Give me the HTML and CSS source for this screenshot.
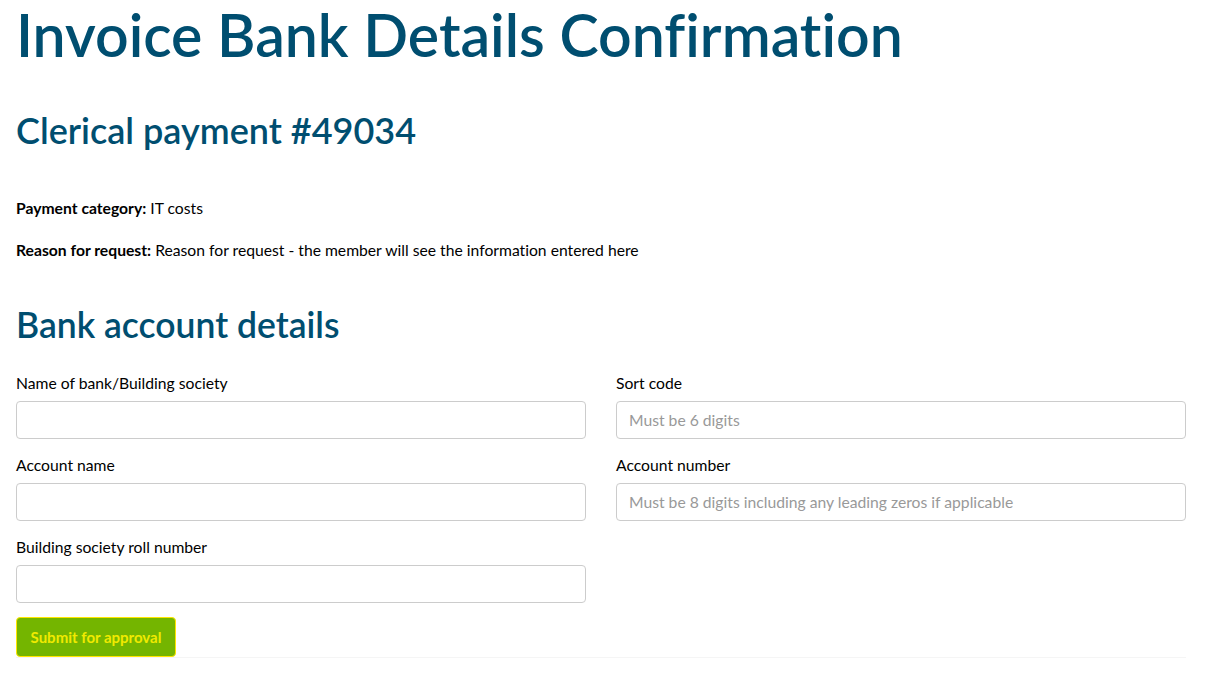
FILE: index.html
```html
<!DOCTYPE html>
<html lang="en">
<head>
<meta charset="utf-8">
<title>Invoice Bank Details Confirmation</title>
<link rel="stylesheet" href="styles.css">
</head>
<body>
<main class="page">
  <h1 class="title">Invoice Bank Details Confirmation</h1>
  <h2 class="subtitle">Clerical payment #49034</h2>
  <p class="meta"><strong>Payment category:</strong> IT costs</p>
  <p class="meta"><strong>Reason for request:</strong> Reason for request - the member will see the information entered here</p>
  <h2 class="section-title">Bank account details</h2>
  <form class="form">
    <div class="grid">
      <div class="field">
        <label class="label" for="bank">Name of bank/Building society</label>
        <input class="input" id="bank" type="text">
      </div>
      <div class="field">
        <label class="label" for="sort">Sort code</label>
        <input class="input" id="sort" type="text" placeholder="Must be 6 digits">
      </div>
      <div class="field">
        <label class="label" for="accname">Account name</label>
        <input class="input" id="accname" type="text">
      </div>
      <div class="field">
        <label class="label" for="accnum">Account number</label>
        <input class="input" id="accnum" type="text" placeholder="Must be 8 digits including any leading zeros if applicable">
      </div>
      <div class="field">
        <label class="label" for="roll">Building society roll number</label>
        <input class="input" id="roll" type="text">
      </div>
    </div>
    <div class="actions">
      <button class="btn" type="button">Submit for approval</button>
    </div>
  </form>
</main>
</body>
</html>
```

FILE: styles.css
```css
* { box-sizing: border-box; }
html, body { margin: 0; padding: 0; background: #fff; }
body {
  font-family: "Lato", "Noto Sans", sans-serif;
  font-size: 15.7px;
  color: #000;
  font-variant-ligatures: none;
}
.page {
  padding: 0 26px 0 16px;
}
.title {
  margin: 0;
  padding-top: 4px;
  font-weight: 600;
  font-size: 59px;
  line-height: 62px;
  color: #004e70;
}
.subtitle {
  margin: 44px 0 0;
  font-weight: 600;
  font-size: 36px;
  line-height: 40px;
  color: #004e70;
}
.meta {
  margin: 0;
  line-height: 20px;
}
.subtitle + .meta { margin-top: 48px; }
.meta + .meta { margin-top: 22px; }
.section-title {
  margin: 45px 0 0;
  font-weight: 600;
  font-size: 35.5px;
  line-height: 40px;
  color: #004e70;
}
.form {
  margin-top: 28px;
  border-bottom: 1px solid #f5f5f5;
}
.grid {
  display: grid;
  grid-template-columns: 570px 570px;
  column-gap: 30px;
  row-gap: 16px;
}
.field { display: flex; flex-direction: column; }
.label {
  line-height: 20px;
  margin-bottom: 8px;
}
.input {
  height: 38px;
  border: 1px solid #cccccc;
  border-radius: 4px;
  padding: 0 12px;
  font: inherit;
  color: #333;
}
.input::placeholder { color: #999; }
.actions { margin-top: 14px; }
.btn {
  display: block;
  width: 160px;
  height: 40px;
  border: 1px solid #ffe600;
  border-radius: 4px;
  background: #74b500;
  color: #f0ea00;
  font-family: inherit;
  font-size: 15px;
  font-weight: 700;
  padding: 0;
}
```
